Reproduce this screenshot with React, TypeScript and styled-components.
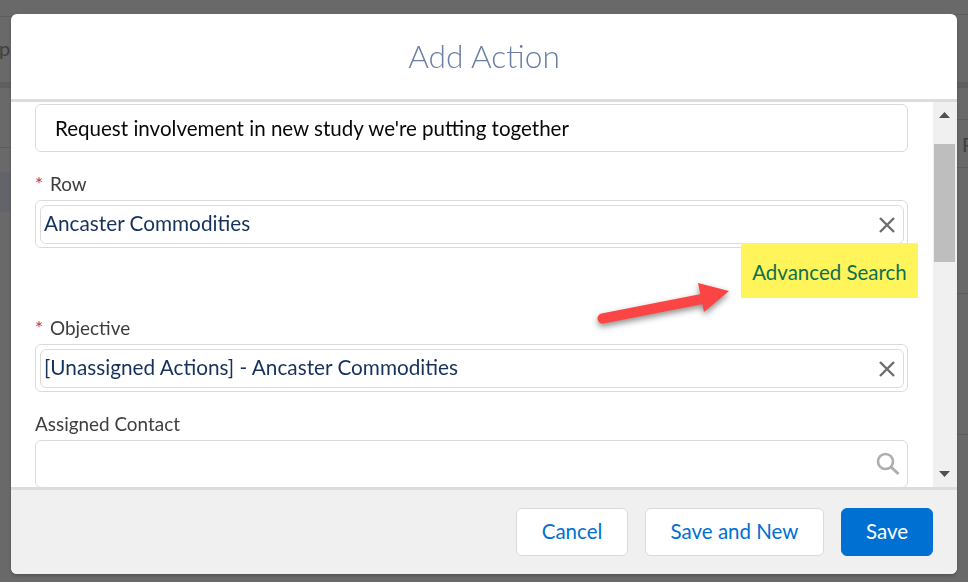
import React from 'react'
import styled, { createGlobalStyle } from 'styled-components'

const GlobalStyle = createGlobalStyle`
  html, body {
    margin: 0;
    padding: 0;
    height: 100%;
    overflow: hidden;
    background: #696969;
    font-family: "Lato", "Noto Sans", sans-serif;
  }
`

/* page behind the dialog, dimmed by the backdrop */
const Behind = styled.div`
  display: flex;
  height: 582px;
  overflow: hidden;
  background: #696969;
`

const BehindColumn = styled.div`
  flex: 1;
  display: flex;
  flex-direction: column;
`

const BehindRow = styled.div<{ $height: number; $tint?: string; $line?: boolean }>`
  height: ${p => p.$height}px;
  flex-shrink: 0;
  box-sizing: border-box;
  background: ${p => p.$tint || 'transparent'};
  border-bottom: ${p => (p.$line ? '1px solid #5d5d5d' : 'none')};
  display: flex;
  align-items: center;
  color: #3f3f3f;
  font-size: 20px;
`

const BehindTextLeft = styled.span`
  margin: 0 0 4px -1px;
`

const BehindTextRight = styled.span`
  margin-left: auto;
  margin-right: -8px;
  width: 14px;
`

const BehindBottom = styled.div`
  height: 8px;
  margin-top: auto;
  margin-left: 147px;
  border-top: 1px solid #5a5a5a;
`

const Overlay = styled.div`
  position: fixed;
  inset: 0;
  box-sizing: border-box;
  padding: 14px 11px 8px;
  display: flex;
`

const Modal = styled.div`
  position: relative;
  flex: 1;
  display: flex;
  flex-direction: column;
  border-radius: 6px;
  overflow: hidden;
  background: #fff;
  box-shadow: 0 2px 3px rgba(0, 0, 0, 0.2);
`

const Header = styled.header`
  height: 85px;
  flex-shrink: 0;
  box-sizing: content-box;
  display: flex;
  align-items: center;
  justify-content: center;
  border-bottom: 3px solid #dcdcdc;
`

const Title = styled.h2`
  margin: 0 0 2px;
  font-size: 31.7px;
  font-weight: 300;
  color: #6a7fa3;
`

const Body = styled.div`
  flex: 1;
  min-height: 0;
  display: flex;
`

const Content = styled.div`
  flex: 1;
  min-width: 0;
  overflow: hidden;
  box-sizing: border-box;
  padding: 2px 25px 0 24px;
  display: flex;
  flex-direction: column;
`

const Field = styled.div<{ $gap?: number }>`
  margin-top: ${p => p.$gap || 0}px;
  flex-shrink: 0;
`

const Label = styled.label`
  display: block;
  height: 24px;
  margin-bottom: 4px;
  line-height: 24px;
  font-size: 18.9px;
  color: #3e3e3c;
`

const Required = styled.span`
  color: #c23934;
  margin-right: 7px;
`

const TextBox = styled.div`
  box-sizing: border-box;
  height: 48px;
  padding: 0 19px;
  display: flex;
  align-items: center;
  justify-content: space-between;
  flex-shrink: 0;
  border: 1px solid #dddbda;
  border-radius: 6px;
  font-size: 20.55px;
  color: #080707;
`

const LookupBox = styled.div`
  box-sizing: border-box;
  height: 48px;
  padding: 4px 3px 4px 4px;
  border: 1px solid #dddbda;
  border-radius: 6px;
`

const Pill = styled.div`
  box-sizing: border-box;
  height: 39px;
  padding: 0 7px 0 3px;
  display: flex;
  align-items: center;
  justify-content: space-between;
  border: 1px solid #dddbda;
  border-radius: 6px;
  font-size: 20.75px;
  line-height: 35px;
  color: #16325c;
`

const PillText = styled.span`
  margin-bottom: 2px;
`

const SearchBox = styled(TextBox)`
  padding-right: 7px;
  justify-content: flex-end;
`

const AdvancedRow = styled.div`
  position: relative;
  display: flex;
  justify-content: flex-end;
  margin: -5px -10px 0 0;
  flex-shrink: 0;
`

const Highlight = styled.a`
  box-sizing: border-box;
  height: 55px;
  width: 177px;
  padding-top: 3px;
  display: flex;
  align-items: center;
  justify-content: center;
  background: #fff55a;
  color: #0e7050;
  font-size: 20.5px;
`

const Arrow = styled.svg`
  position: absolute;
  left: 567px;
  top: 251px;
  overflow: visible;
  filter: drop-shadow(0 3px 3px rgba(0, 0, 0, 0.45));
`

const Scrollbar = styled.div`
  width: 24px;
  flex-shrink: 0;
  display: flex;
  flex-direction: column;
  align-items: flex-start;
  background: #f0f0f0;
  padding-left: 1px;
  box-sizing: border-box;
`

const ScrollArrow = styled.svg<{ $down?: boolean }>`
  flex-shrink: 0;
  display: block;
  margin-left: 5px;
  margin-top: ${p => (p.$down ? 'auto' : '10px')};
  margin-bottom: ${p => (p.$down ? '10px' : '0')};
`

const Thumb = styled.div`
  width: 21px;
  height: 118px;
  margin-top: 26px;
  background: #bebebe;
`

const Footer = styled.footer`
  height: 87px;
  flex-shrink: 0;
  box-sizing: border-box;
  border-top: 3px solid #dcdcdc;
  background: #f0f0f0;
  padding: 18px 24px 0 0;
  display: flex;
  justify-content: flex-end;
  align-items: flex-start;
  gap: 17px;
`

const Button = styled.button<{ $primary?: boolean; $width: number }>`
  box-sizing: border-box;
  width: ${p => p.$width}px;
  height: 48px;
  padding: 0 0 2px;
  border-radius: 6px;
  border: 1px solid ${p => (p.$primary ? '#0070d2' : '#dddbda')};
  background: ${p => (p.$primary ? '#0070d2' : '#fff')};
  color: ${p => (p.$primary ? '#fff' : '#0070d2')};
  font-family: inherit;
  font-size: 20.5px;
`

const ClearIcon = () => (
  <svg width="18" height="18" viewBox="0 0 18 18">
    <path d="M2 2 L16 16 M16 2 L2 16" stroke="#706e6b" strokeWidth="2.4" fill="none" />
  </svg>
)

const SearchIcon = () => (
  <svg width="24" height="24" viewBox="0 0 24 24">
    <circle cx="9.5" cy="9.5" r="7.5" stroke="#b0adab" strokeWidth="2.6" fill="none" />
    <path d="M15 15 L22.5 22" stroke="#b0adab" strokeWidth="3" fill="none" />
  </svg>
)

const App = () => (
  <>
    <GlobalStyle />
    <Behind>
      <BehindColumn>
        <BehindRow $height={17} $line />
        <BehindRow $height={65}><BehindTextLeft>p</BehindTextLeft></BehindRow>
        <BehindRow $height={6} $tint="#5f5f5f" />
        <BehindRow $height={60} $line />
        <BehindRow $height={24} />
        <BehindRow $height={40} $tint="#62646a" />
        <BehindBottom />
      </BehindColumn>
      <BehindColumn>
        <BehindRow $height={15} $line />
        <BehindRow $height={67} />
        <BehindRow $height={6} $tint="#5f5f5f" />
        <BehindRow $height={32} $line />
        <BehindRow $height={48} $line><BehindTextRight>R</BehindTextRight></BehindRow>
        <BehindRow $height={126} $line />
        <BehindRow $height={141} $line />
      </BehindColumn>
    </Behind>
    <Overlay>
      <Modal>
        <Header>
          <Title>Add Action</Title>
        </Header>
        <Body>
          <Content>
            <TextBox>Request involvement in new study we're putting together</TextBox>
            <Field $gap={20}>
              <Label><Required>*</Required>Row</Label>
              <LookupBox>
                <Pill><PillText>Ancaster Commodities</PillText><ClearIcon /></Pill>
              </LookupBox>
            </Field>
            <AdvancedRow>
              <Highlight>Advanced Search</Highlight>
            </AdvancedRow>
            <Field $gap={18}>
              <Label><Required>*</Required>Objective</Label>
              <LookupBox>
                <Pill><PillText>[Unassigned Actions] - Ancaster Commodities</PillText><ClearIcon /></Pill>
              </LookupBox>
            </Field>
            <Field $gap={20}>
              <Label>Assigned Contact</Label>
              <SearchBox><SearchIcon /></SearchBox>
            </Field>
          </Content>
          <Scrollbar>
            <ScrollArrow width="11" height="6" viewBox="0 0 11 6">
              <path d="M5.5 0 L11 6 L0 6 Z" fill="#505050" />
            </ScrollArrow>
            <Thumb />
            <ScrollArrow $down width="11" height="6" viewBox="0 0 11 6">
              <path d="M0 0 L11 0 L5.5 6 Z" fill="#505050" />
            </ScrollArrow>
          </Scrollbar>
        </Body>
        <Footer>
          <Button $width={112}>Cancel</Button>
          <Button $width={179}>Save and New</Button>
          <Button $width={92} $primary>Save</Button>
        </Footer>
        <Arrow width="160" height="60" viewBox="0 0 160 60">
          <path d="M24.5 53.5 L124 34" stroke="#fb4444" strokeWidth="10" strokeLinecap="round" fill="none" />
          <path d="M120 18 L151 26 L126 47 Z" fill="#fb4444" />
        </Arrow>
      </Modal>
    </Overlay>
  </>
)

export default App
